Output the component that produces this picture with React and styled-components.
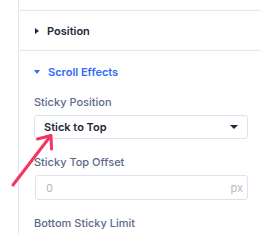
import React from "react";
import styled, { createGlobalStyle } from "styled-components";

const Global = createGlobalStyle`
  html, body {
    margin: 0;
    padding: 0;
    background: #ffffff;
    font-family: Inter, "Noto Sans", sans-serif;
    -webkit-font-smoothing: antialiased;
  }
`;

const Page = styled.div`
  position: relative;
  width: 261px;
  height: 234px;
  overflow: hidden;
  background: #fff;
`;

const Panel = styled.div`
  margin-left: 18px;
  height: 100%;
  border-left: 1.5px solid #e4e6f1;
`;

const Divider = styled.div`
  height: 10px;
  border-bottom: 1.5px solid #e4e6f1;
`;

const Section = styled.div`
  border-bottom: ${(p) => (p.$last ? "none" : "1.5px solid #e4e6f1")};
  padding: ${(p) => (p.$open ? "14px 13px 0 15px" : "0 13px 0 15px")};
  height: ${(p) => (p.$open ? "auto" : "39px")};
  display: flex;
  flex-direction: column;
  justify-content: ${(p) => (p.$open ? "flex-start" : "center")};
`;

const Header = styled.div`
  display: flex;
  align-items: center;
  gap: 8px;
  height: 14px;
  font-size: 11px;
  font-weight: 600;
  color: ${(p) => (p.$open ? "#2d6bfa" : "#232838")};
`;

const Caret = styled.span`
  width: 0;
  height: 0;
  border-style: solid;
  ${(p) =>
    p.$open
      ? `border-width: 4px 3.5px 0 3.5px; border-color: currentColor transparent transparent transparent; margin-left: 0;`
      : `border-width: 3.5px 0 3.5px 4px; border-color: transparent transparent transparent currentColor; margin-left: 1px;`}
`;

const Label = styled.div`
  height: 14px;
  line-height: 14px;
  margin-top: ${(p) => p.$gap}px;
  font-size: 11px;
  font-weight: 500;
  color: #5c6a8c;
`;

const Select = styled.div`
  margin-top: 6px;
  height: 24px;
  box-sizing: border-box;
  border: 1px solid #dfe2ee;
  border-radius: 3px;
  display: flex;
  align-items: center;
  justify-content: space-between;
  padding: 0 9px 0 9px;
  font-size: 11px;
  font-weight: 600;
  color: #232838;
`;

const SelectCaret = styled.span`
  width: 0;
  height: 0;
  border-style: solid;
  border-width: 4.5px 4px 0 4px;
  border-color: #232838 transparent transparent transparent;
`;

const Input = styled.div`
  margin-top: 6px;
  margin-left: 1px;
  height: 25px;
  box-sizing: border-box;
  border: 1px solid #dfe2ee;
  border-radius: 3px;
  display: flex;
  align-items: center;
  justify-content: space-between;
  padding: 0 4px 0 10px;
  font-size: 11px;
  color: #b3b9c9;
`;

const Arrow = styled.svg`
  position: absolute;
  left: 0;
  top: 0;
  pointer-events: none;
`;

export default function App() {
  return (
    <>
      <Global />
      <Page>
        <Panel>
          <Divider />
          <Section>
            <Header>
              <Caret />
              Position
            </Header>
          </Section>
          <Section $open $last>
            <Header $open>
              <Caret $open />
              Scroll Effects
            </Header>
            <Label $gap={16}>Sticky Position</Label>
            <Select>
              Stick to Top
              <SelectCaret />
            </Select>
            <Label $gap={16}>Sticky Top Offset</Label>
            <Input>
              <span>0</span>
              <span>px</span>
            </Input>
            <Label $gap={16}>Bottom Sticky Limit</Label>
          </Section>
        </Panel>
        <Arrow width="261" height="234" viewBox="0 0 261 234">
          <g
            stroke="#f2365f"
            strokeWidth="3"
            strokeLinecap="round"
            strokeLinejoin="round"
            fill="none"
          >
            <line x1="13" y1="185" x2="50.5" y2="136" />
            <polyline points="37.5,139 51,135.5 51.5,149" />
          </g>
        </Arrow>
      </Page>
    </>
  );
}
